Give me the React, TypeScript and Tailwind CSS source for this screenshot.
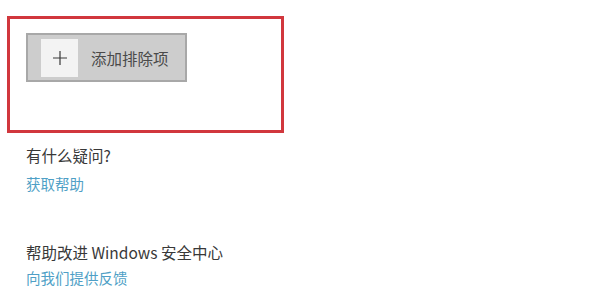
import React from 'react';

const font = { fontFamily: '"Noto Sans CJK SC", "Noto Sans", sans-serif' };

export default function App() {
  return (
    <div className="w-[604px] h-[293px] bg-white overflow-hidden pt-[16px] pl-[7px]" style={font}>
      <div className="w-[277px] h-[117px] border-[3px] border-[#d1373d] pt-[14px] pl-[16px]">
        <button className="w-[161px] h-[49px] border-2 border-[#a8a8a8] bg-[#cdcdcd] flex items-center pl-[13px]">
          <span className="w-[37px] h-[38px] bg-[#f3f3f3] flex items-center justify-center">
            <svg width="16" height="16" viewBox="0 0 16 16">
              <path d="M8 1v14M1 8h14" stroke="#3a3a3a" strokeWidth="1.2" fill="none" />
            </svg>
          </span>
          <span className="ml-[13px] text-[15.5px] leading-[20px] text-[#4a4a4a]">添加排除项</span>
        </button>
      </div>
      <div className="ml-[19px] flex flex-col items-start">
        <p className="mt-[12px] text-[15.5px] leading-[20px] text-[#383838]">有什么疑问?</p>
        <a className="mt-[9px] text-[14.5px] leading-[20px] text-[#4f9fc6]">获取帮助</a>
        <p className="mt-[48px] text-[15.5px] leading-[20px] text-[#383838]">帮助改进 Windows 安全中心</p>
        <a className="mt-[6px] text-[14.5px] leading-[20px] text-[#4f9fc6]">向我们提供反馈</a>
      </div>
    </div>
  );
}
